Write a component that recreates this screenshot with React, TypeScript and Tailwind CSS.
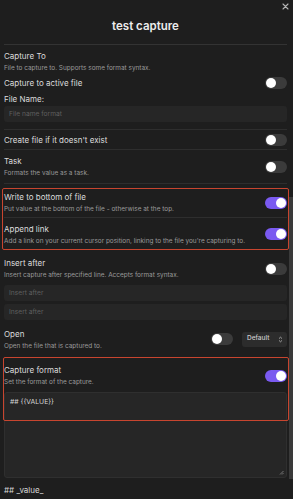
import React from 'react';

const Toggle = ({ on = false }: { on?: boolean }) => (
  <div
    className={`w-[22px] h-[12px] rounded-full flex items-center px-[1px] shrink-0 ${
      on ? 'bg-[#7a5af0] justify-end' : 'bg-[#3b3b3b] justify-start'
    }`}
  >
    <div className="w-[10px] h-[10px] rounded-full bg-white" />
  </div>
);

const Name = ({ children }: { children: React.ReactNode }) => (
  <div className="text-[8px] leading-[14px] text-[#dcdcdc]">{children}</div>
);

const Desc = ({ children }: { children: React.ReactNode }) => (
  <div className="text-[6.45px] leading-[11px] text-[#9a9a9a]">{children}</div>
);

const Input = ({ placeholder }: { placeholder: string }) => (
  <div className="h-[16px] rounded-[3px] bg-[#262626] flex items-center px-[5px] text-[6.7px] text-[#5f5f5f]">
    {placeholder}
  </div>
);

const App = () => {
  return (
    <div
      className="relative w-[293px] h-[499px] overflow-hidden bg-[#1e1e1e]"
      style={{ fontFamily: 'Inter, "Noto Sans", sans-serif' }}
    >
      {/* close */}
      <svg className="absolute top-[3px] right-[4px]" width="7" height="7" viewBox="0 0 7 7">
        <path d="M1 1 L6 6 M6 1 L1 6" stroke="#b5b5b5" strokeWidth="1.1" strokeLinecap="round" />
      </svg>
      {/* scrollbar thumb */}
      <div className="absolute right-0 top-[197px] w-[4px] h-[282px] bg-[#3a3a3a]" />

      <div className="pl-[4px] pr-[6px]">
        <div className="h-[45px] pt-[10px] flex items-center justify-center border-b border-[#333333]">
          <div className="text-[11.5px] font-semibold text-[#ececec]">test capture</div>
        </div>

        <div className="pt-[4px]">
          <Name>Capture To</Name>
          <Desc>File to capture to. Supports some format syntax.</Desc>
        </div>

        <div className="h-[18px] flex items-center justify-between">
          <Name>Capture to active file</Name>
          <Toggle />
        </div>

        <Name>File Name:</Name>
        <Input placeholder="File name format" />

        <div className="h-[8px] border-b border-[#2e2e2e]" />

        <div className="h-[20px] flex items-center justify-between border-b border-[#2e2e2e]">
          <Name>Create file if it doesn't exist</Name>
          <Toggle />
        </div>

        <div className="h-[34px] flex items-center justify-between border-b border-[#2e2e2e]">
          <div>
            <Name>Task</Name>
            <Desc>Formats the value as a task.</Desc>
          </div>
          <Toggle />
        </div>

        <div className="relative mt-[4px]">
          <div className="absolute -left-[2px] -right-[2px] top-0 bottom-0 border-[1.5px] border-[#c8452f] rounded-[2px]" />
          <div className="h-[30px] mt-[2px] flex items-center justify-between border-b border-[#2e2e2e]">
            <div>
              <Name>Write to bottom of file</Name>
              <Desc>Put value at the bottom of the file - otherwise at the top.</Desc>
            </div>
            <Toggle on />
          </div>
          <div className="h-[32px] flex items-center justify-between">
            <div>
              <Name>Append link</Name>
              <Desc>Add a link on your current cursor position, linking to the file you're capturing to.</Desc>
            </div>
            <Toggle on />
          </div>
        </div>

        <div className="h-[35px] pt-[2px] flex items-center justify-between">
          <div>
            <Name>Insert after</Name>
            <Desc>Insert capture after specified line. Accepts format syntax.</Desc>
          </div>
          <Toggle />
        </div>

        <div className="flex flex-col gap-[3px]">
          <Input placeholder="Insert after" />
          <Input placeholder="Insert after" />
        </div>

        <div className="h-[36px] pt-[2px] flex items-center justify-between">
          <div>
            <Name>Open</Name>
            <Desc>Open the file that is captured to.</Desc>
          </div>
          <div className="flex items-center gap-[9px]">
            <Toggle />
            <div className="w-[45px] h-[15px] rounded-[3px] bg-[#2c2c2c] flex items-center justify-between pl-[5px] pr-[4px]">
              <span className="text-[6.5px] font-medium text-[#cfcfcf]">Default</span>
              <svg width="5" height="7" viewBox="0 0 5 7">
                <path d="M1 2.6 L2.5 1.2 L4 2.6 M1 4.4 L2.5 5.8 L4 4.4" stroke="#bdbdbd" strokeWidth="0.8" fill="none" />
              </svg>
            </div>
          </div>
        </div>

        <div className="relative mt-[1px]">
          <div className="absolute -left-[1px] -right-[2px] top-0 h-[64px] border-[1.5px] border-[#c8452f] rounded-[2px] z-10" />
          <div className="pt-[6px] flex items-center justify-between">
            <div>
              <Name>Capture format</Name>
              <Desc>Set the format of the capture.</Desc>
            </div>
            <Toggle on />
          </div>
          <div className="relative mt-[4px] h-[86px] rounded-[3px] bg-[#262626] border border-[#2f2f2f] px-[5px] pt-[3px]">
            <div className="text-[6.8px] leading-[12px] text-[#d6d6d6]">{'## {{VALUE}}'}</div>
            <svg className="absolute right-[2px] bottom-[2px]" width="5" height="5" viewBox="0 0 5 5">
              <path d="M1 4.5 L4.5 1 M3 4.5 L4.5 3" stroke="#8a8a8a" strokeWidth="0.8" />
            </svg>
          </div>
        </div>

        <div className="mt-[6px] text-[8px] leading-[12px] text-[#d8d8d8]">## _value_</div>
      </div>
    </div>
  );
};

export default App;
